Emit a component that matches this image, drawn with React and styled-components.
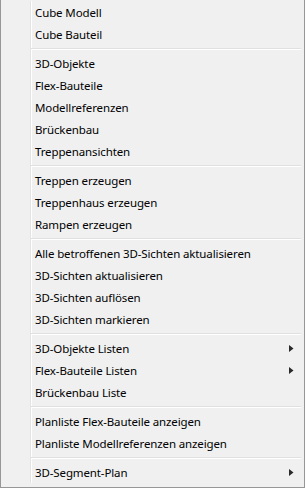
import React from "react";
import styled, { createGlobalStyle } from "styled-components";

const Global = createGlobalStyle`
  html, body { margin: 0; padding: 0; background: #f0f0f0; }
  * { box-sizing: border-box; }
`;

const Menu = styled.div`
  width: 305px;
  height: 488px;
  background: #f0f0f0;
  border-left: 1px solid #979797;
  border-right: 1px solid #979797;
  border-bottom: 1px solid #979797;
  padding: 1px 0 3px;
  font-family: "Noto Sans", "Open Sans", sans-serif;
  font-size: 11.5px;
  letter-spacing: -0.12px;
  color: #000;
`;

const List = styled.div`
  display: flex;
  flex-direction: column;
  background-image: linear-gradient(
    to right,
    transparent 29px,
    #e2e3e3 29px,
    #e2e3e3 30px,
    #ffffff 30px,
    #ffffff 31px,
    transparent 31px
  );
`;

const Row = styled.div`
  height: 22px;
  display: flex;
  align-items: center;
  justify-content: space-between;
  padding: 0 10px 0 34px;
  white-space: nowrap;
  line-height: 22px;
`;

const Label = styled.span`
  display: block;
  position: relative;
  top: 1px;
`;

const Separator = styled.div`
  height: 7px;
  margin: 0 3px 0 30px;
  display: flex;
  flex-direction: column;
  justify-content: center;
  &::before {
    content: "";
    display: block;
    height: 1px;
    background: #e0e0e0;
  }
  &::after {
    content: "";
    display: block;
    height: 1px;
    background: #ffffff;
  }
`;

const Arrow = () => (
  <svg width="5" height="7" viewBox="0 0 5 7" aria-hidden="true">
    <polygon points="0,0 4.5,3.5 0,7" fill="#2a2a2a" />
  </svg>
);

const groups = [
  [["Cube Modell"], ["Cube Bauteil"]],
  [["3D-Objekte"], ["Flex-Bauteile"], ["Modellreferenzen"], ["Brückenbau"], ["Treppenansichten"]],
  [["Treppen erzeugen"], ["Treppenhaus erzeugen"], ["Rampen erzeugen"]],
  [
    ["Alle betroffenen 3D-Sichten aktualisieren"],
    ["3D-Sichten aktualisieren"],
    ["3D-Sichten auflösen"],
    ["3D-Sichten markieren"],
  ],
  [["3D-Objekte Listen", true], ["Flex-Bauteile Listen", true], ["Brückenbau Liste"]],
  [["Planliste Flex-Bauteile anzeigen"], ["Planliste Modellreferenzen anzeigen"]],
  [["3D-Segment-Plan", true]],
];

export default function App() {
  return (
    <>
      <Global />
      <Menu>
        <List>
          {groups.map((g, gi) => (
            <React.Fragment key={gi}>
              {gi > 0 && <Separator />}
              {g.map(([label, sub]) => (
                <Row key={label}>
                  <Label>{label}</Label>
                  {sub && <Arrow />}
                </Row>
              ))}
            </React.Fragment>
          ))}
        </List>
      </Menu>
    </>
  );
}
